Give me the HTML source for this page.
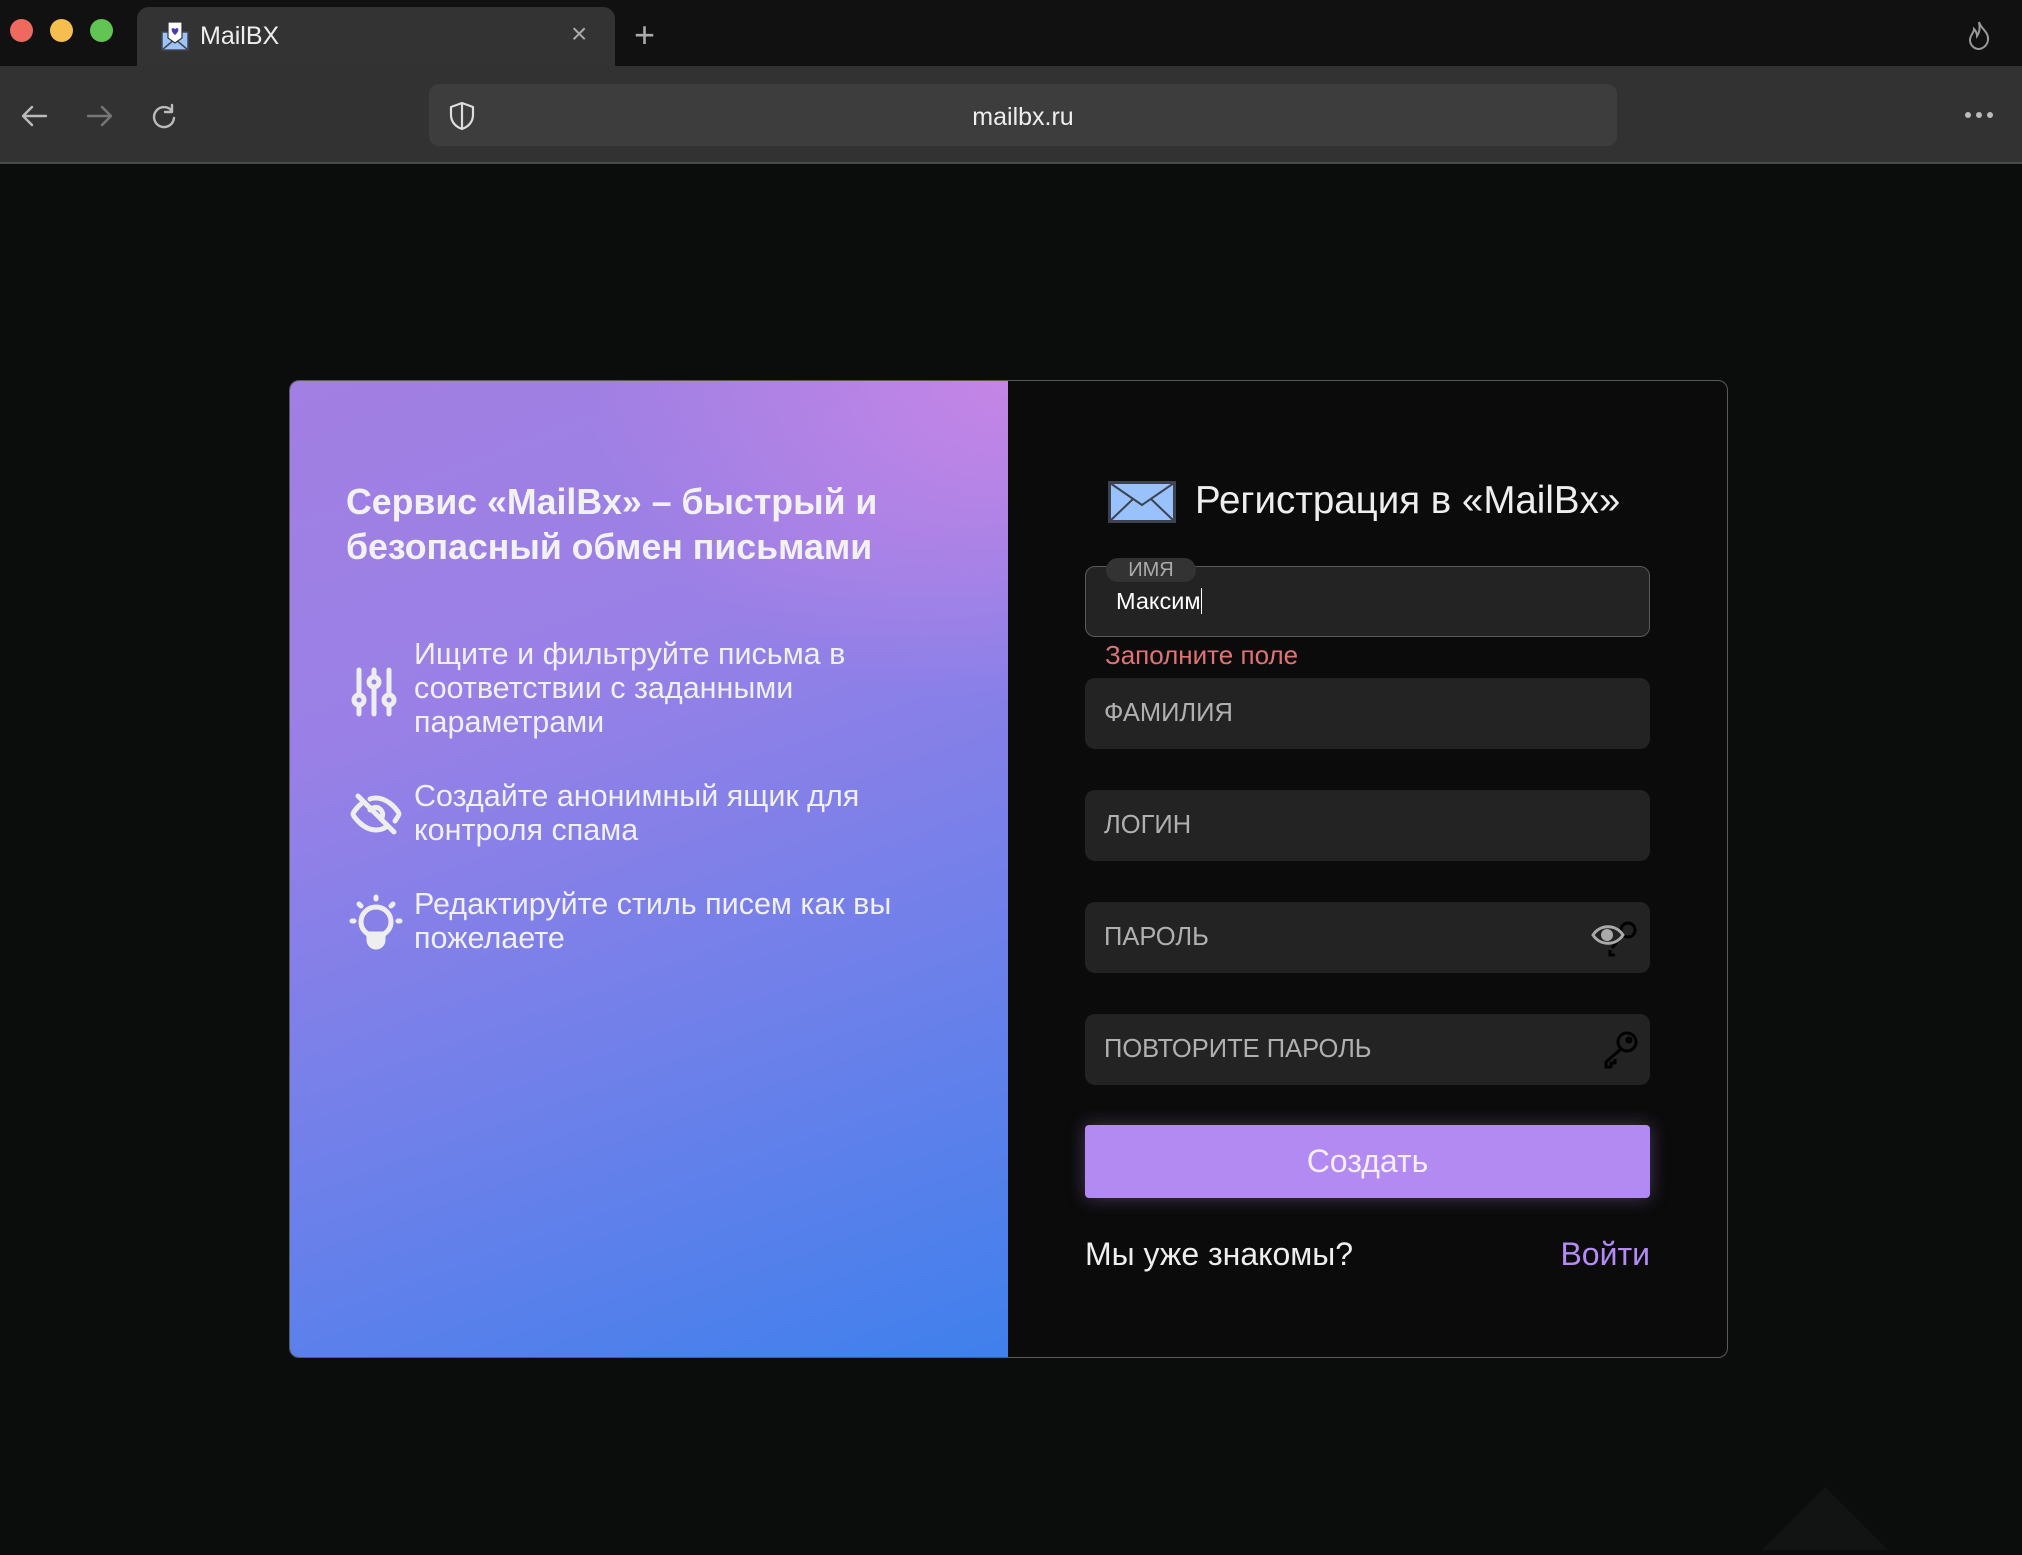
<!DOCTYPE html>
<html><head><meta charset="utf-8"><style>
*{box-sizing:border-box;margin:0;padding:0}
body{width:2022px;height:1548px;background:#0b0c0c;font-family:"Liberation Sans","Noto Sans CJK SC",sans-serif;position:relative;overflow:hidden;color:#eee}
.abs{position:absolute}
.tabbar{left:0;top:0;width:2022px;height:66px;background:#111}
.tl{width:23px;height:23px;border-radius:50%;top:19px}
.tab{left:137px;top:7px;width:478px;height:60px;background:#333;border-radius:12px 12px 0 0}
.toolbar{left:0;top:66px;width:2022px;height:98px;background:#323232;border-bottom:2px solid #4a4a4a}
.url{left:429px;top:84px;width:1188px;height:62px;background:#3d3d3d;border-radius:10px}
.card{left:289px;top:380px;width:1439px;height:978px;border:1.5px solid #5a5a5a;border-radius:10px;overflow:hidden;background:#0b0b0b}
.left{left:0;top:0;width:718px;height:100%;background:linear-gradient(160deg,#a27fe2 0%,#9a80e6 30%,#6f80ea 65%,#3f80ec 100%)}
.glow{left:0;top:0;width:718px;height:100%;background:radial-gradient(ellipse 420px 320px at 100% 0%,rgba(210,135,230,.75),rgba(210,135,230,0))}
.feat{font-size:30.5px;line-height:34px;color:#f0f0f0;left:124px;width:500px}
.inp{left:795px;width:565px;height:71px;background:#232323;border-radius:10px}
.ph{left:19px;top:21px;font-size:25.5px;color:#b0b0b0}
</style></head><body>
<div class="abs tabbar"></div>
<div class="abs tl" style="left:10px;background:#ee6a5f"></div>
<div class="abs tl" style="left:50px;background:#f5be4f"></div>
<div class="abs tl" style="left:90px;background:#61c554"></div>
<div class="abs tab"></div>
<svg class="abs" style="left:160px;top:20px" width="30" height="32" viewBox="0 0 30 32"><rect x="2" y="12" width="26" height="18" fill="#9cc4f7" stroke="#445" stroke-width="1.5"/><path d="M2 30 L15 19 L28 30" fill="none" stroke="#445" stroke-width="1.5"/><path d="M8 2 H22 V18 L15 23 L8 18Z" fill="#fff" stroke="#333" stroke-width="1.2"/><path d="M15 15 C10 11 11 6 15 9 C19 6 20 11 15 15Z" fill="#4b3bb0"/></svg>
<div class="abs" style="left:200px;top:22px;font-size:25px;color:#eee">MailBX</div>
<div class="abs" style="left:571px;top:18px;font-size:28px;color:#aaa">×</div>
<div class="abs" style="left:634px;top:14px;font-size:36px;color:#aaa;font-weight:300">+</div>
<svg class="abs" style="left:1966px;top:20px" width="26" height="30" viewBox="0 0 26 30"><path d="M13 2 C15 9 23 12 22 20 C21 27 15 29 13 29 C8 29 4 25 4 20 C4 15 8 13 8 9 C11 12 11 15 11 16 C14 12 14 7 13 2Z" fill="none" stroke="#999" stroke-width="2"/></svg>
<div class="abs toolbar"></div>
<svg class="abs" style="left:20px;top:102px" width="160" height="28" viewBox="0 0 160 28"><g fill="none" stroke-width="2.4" stroke-linecap="round" stroke-linejoin="round"><path d="M26 14 H4 M12 5 L3 14 L12 23" stroke="#bbb"/><path d="M68 14 H90 M82 5 L91 14 L82 23" stroke="#777"/><path d="M152 9 A10 10 0 1 0 154 16 M152 3 V10 H145" stroke="#bbb"/></g></svg>
<div class="abs url"></div>
<svg class="abs" style="left:446px;top:100px" width="32" height="32" viewBox="0 0 32 32"><path d="M16 3 L27 7 V15 C27 22 22 27 16 29 C10 27 5 22 5 15 V7Z M16 3 V29" fill="none" stroke="#ddd" stroke-width="2.2" stroke-linejoin="round"/></svg>
<div class="abs" style="left:0;width:2046px;text-align:center;top:103px;font-size:25px;color:#eee">mailbx.ru</div>
<svg class="abs" style="left:1964px;top:110px" width="30" height="10"><circle cx="4" cy="5" r="3" fill="#bbb"/><circle cx="15" cy="5" r="3" fill="#bbb"/><circle cx="26" cy="5" r="3" fill="#bbb"/></svg>
<svg class="abs" style="left:1760px;top:1485px" width="130" height="70"><path d="M65 2 L128 65 H2Z" fill="#121313"/></svg>

<div class="abs card">
 <div class="abs left"></div><div class="abs glow"></div>
 <div class="abs" style="left:56px;top:99px;font-size:35.7px;line-height:45px;font-weight:bold;color:#f2f2f2;width:640px">Сервис «MailBx» – быстрый и безопасный обмен письмами</div>
 <svg class="abs" style="left:60px;top:285px" width="48" height="52" viewBox="0 0 48 52" fill="none" stroke="#eee" stroke-width="5" stroke-linecap="round"><path d="M9 4 V48 M24 4 V48 M39 4 V48"/><circle cx="9" cy="34" r="5" fill="#9a83e6"/><circle cx="24" cy="16" r="5" fill="#9a83e6"/><circle cx="39" cy="34" r="5" fill="#9a83e6"/></svg>
 <div class="abs feat" style="top:256px">Ищите и фильтруйте письма в соответствии с заданными параметрами</div>
 <svg class="abs" style="left:58px;top:405px" width="56" height="52" viewBox="0 0 56 52" fill="none" stroke="#eee" stroke-width="5" stroke-linecap="round"><path d="M10 10 L46 46"/><path d="M14 17 C8 22 5 27 5 28 C5 30 15 44 28 44 C32 44 35 43 38 41 M22 13 C24 12 26 12 28 12 C41 12 51 26 51 28 C51 29 49 32 47 35"/><path d="M22 24 A7 7 0 0 1 33 33"/></svg>
 <div class="abs feat" style="top:398px">Создайте анонимный ящик для контроля спама</div>
 <svg class="abs" style="left:58px;top:513px" width="56" height="56" viewBox="0 0 56 56" fill="none" stroke="#eee" stroke-width="5" stroke-linecap="round"><path d="M28 3 V5 M11 10 L13 12 M45 10 L43 12 M4 27 H6 M50 27 H52"/><path d="M20 40 C14 36 13 31 13 28 A15 15 0 0 1 43 28 C43 31 42 36 36 40 Z"/><path d="M21 42 H35 V46 A7 7 0 0 1 21 46Z" fill="#eee"/></svg>
 <div class="abs feat" style="top:506px">Редактируйте стиль писем как вы пожелаете</div>

 <svg class="abs" style="left:818px;top:100px" width="68" height="42" viewBox="0 0 68 42"><rect x="1.5" y="1.5" width="65" height="39" fill="#99c1fb" stroke="#3c4250" stroke-width="3"/><path d="M2 2 L34 24 L66 2 M2 40 L25 18 M66 40 L43 18" fill="none" stroke="#3c4250" stroke-width="2"/></svg>
 <div class="abs" style="left:905px;top:98px;font-size:38.5px;color:#eee">Регистрация в «MailBx»</div>

 <div class="abs inp" style="top:185px;border:1.5px solid #5a5a5a"></div>
 <div class="abs" style="left:816px;top:177px;width:90px;height:24px;border-radius:12px;background:#333;font-size:20px;color:#aaa;text-align:center;line-height:24px">ИМЯ</div>
 <div class="abs" style="left:826px;top:207px;font-size:23.5px;color:#fff">Максим<span style="display:inline-block;width:1.5px;height:26px;background:#fff;vertical-align:-5px"></span></div>
 <div class="abs" style="left:815px;top:259px;font-size:26px;color:#e07474">Заполните поле</div>
 <div class="abs inp" style="top:297px"><div class="abs ph">ФАМИЛИЯ</div></div>
 <div class="abs inp" style="top:409px"><div class="abs ph">ЛОГИН</div></div>
 <div class="abs inp" style="top:521px"><div class="abs ph">ПАРОЛЬ</div>
  <svg class="abs" style="left:505px;top:18px" width="50" height="38" viewBox="0 0 50 38"><g fill="none" stroke="#000" stroke-width="3"><circle cx="38" cy="10" r="7"/><path d="M33 15 L22 28 M20 30 V35 H25"/></g><path d="M3 15 C10 4 26 4 33 15 C26 26 10 26 3 15Z" fill="#232323" stroke="#aaa" stroke-width="3"/><circle cx="17" cy="15" r="6" fill="#aaa"/></svg></div>
 <div class="abs inp" style="top:633px"><div class="abs ph">ПОВТОРИТЕ ПАРОЛЬ</div>
  <svg class="abs" style="left:516px;top:16px" width="40" height="40" viewBox="0 0 40 40"><g fill="none" stroke="#000" stroke-width="3" stroke-linejoin="round"><circle cx="26" cy="12" r="9"/><circle cx="28" cy="10" r="2"/><path d="M20 19 L5 32 V37 H10 V33 H14 V29"/></g></svg></div>
 <div class="abs" style="left:795px;top:744px;width:565px;height:73px;background:#b389f2;border-radius:4px;box-shadow:0 0 18px rgba(179,137,242,.35);text-align:center;line-height:73px;font-size:32px;color:#f4eefc">Создать</div>
 <div class="abs" style="left:795px;top:855px;font-size:32px;color:#eee">Мы уже знакомы?</div>
 <div class="abs" style="left:1200px;width:160px;text-align:right;top:855px;font-size:32px;color:#b68bf6">Войти</div>
</div>
</body></html>
